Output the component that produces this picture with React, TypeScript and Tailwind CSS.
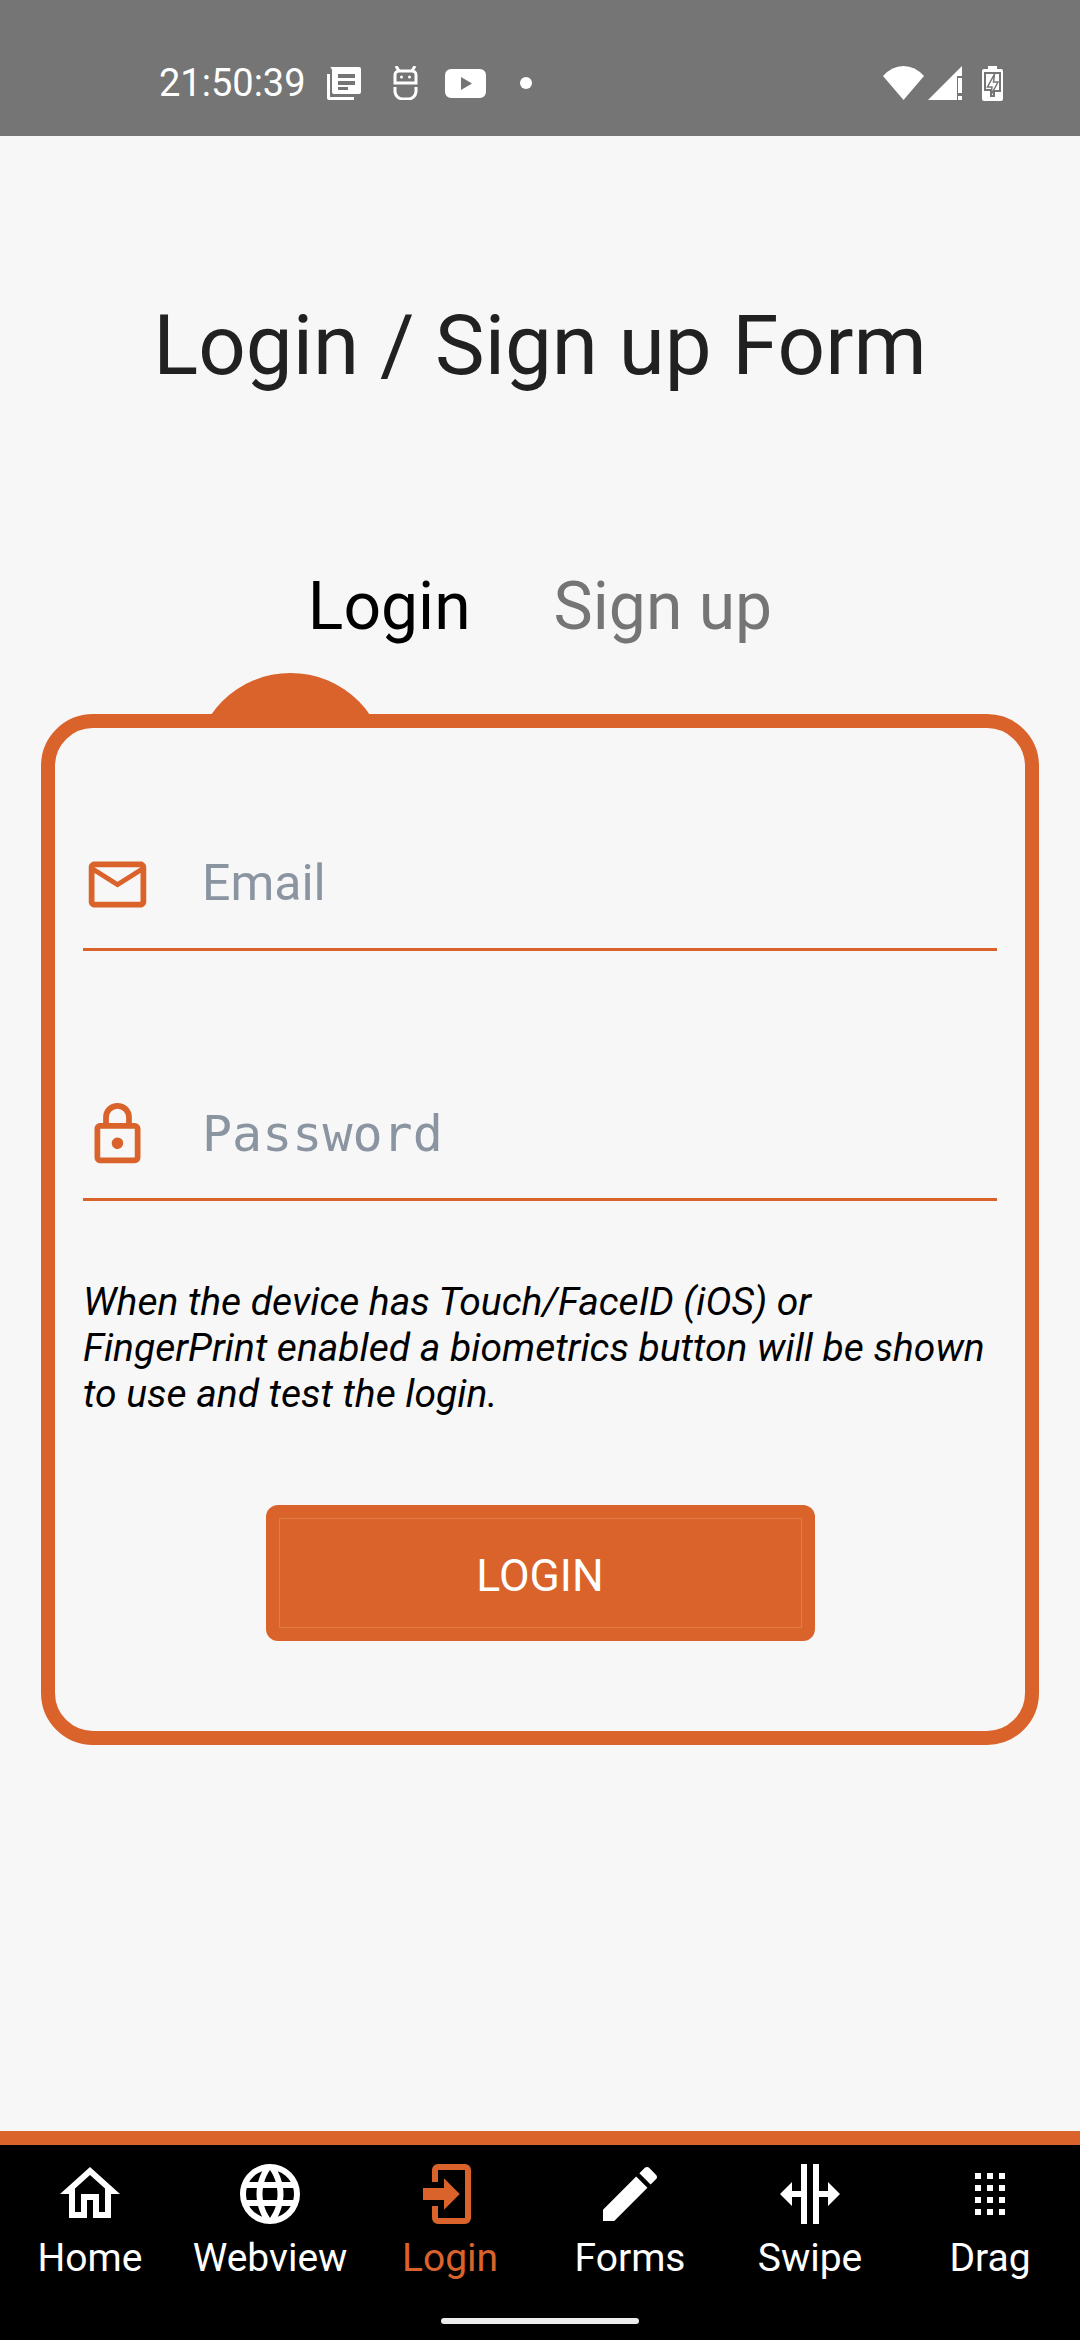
import React from 'react';

const paths = {
  home: 'M12 5.69L17 10.19V18H15V12H9V18H7V10.19L12 5.69M12 3L2 12H5V20H11V14H13V20H19V12H22',
  web: 'M16.36,14C16.44,13.34 16.5,12.68 16.5,12C16.5,11.32 16.44,10.66 16.36,10H19.74C19.9,10.64 20,11.31 20,12C20,12.69 19.9,13.36 19.74,14M14.59,19.56C15.19,18.45 15.65,17.25 15.97,16H18.92C17.96,17.65 16.43,18.93 14.59,19.56M14.34,14H9.66C9.56,13.34 9.5,12.68 9.5,12C9.5,11.32 9.56,10.65 9.66,10H14.34C14.43,10.65 14.5,11.32 14.5,12C14.5,12.68 14.43,13.34 14.34,14M12,19.96C11.17,18.76 10.5,17.43 10.09,16H13.91C13.5,17.43 12.83,18.76 12,19.96M8,8H5.08C6.03,6.34 7.57,5.06 9.4,4.44C8.8,5.55 8.35,6.75 8,8M5.08,16H8C8.35,17.25 8.8,18.45 9.4,19.56C7.57,18.93 6.03,17.65 5.08,16M4.26,14C4.1,13.36 4,12.69 4,12C4,11.31 4.1,10.64 4.26,10H7.64C7.56,10.66 7.5,11.32 7.5,12C7.5,12.68 7.56,13.34 7.64,14M12,4.03C12.83,5.23 13.5,6.57 13.91,8H10.09C10.5,6.57 11.17,5.23 12,4.03M18.92,8H15.97C15.65,6.75 15.19,5.55 14.59,4.44C16.43,5.07 17.96,6.34 18.92,8M12,2C6.47,2 2,6.5 2,12A10,10 0 0,0 12,22A10,10 0 0,0 22,12A10,10 0 0,0 12,2Z',
  login: 'M10,17.25V14H3V10H10V6.75L15.25,12L10,17.25M8,2H17A2,2 0 0,1 19,4V20A2,2 0 0,1 17,22H8A2,2 0 0,1 6,20V16H8V20H17V4H8V8H6V4A2,2 0 0,1 8,2Z',
  pencil: 'M20.71,7.04C21.1,6.65 21.1,6 20.71,5.63L18.37,3.29C18,2.9 17.35,2.9 16.96,3.29L15.12,5.12L18.87,8.87M3,17.25V21H6.75L17.81,9.93L14.06,6.18L3,17.25Z',
  swipe: 'M18,16V13H15V22H13V2H15V11H18V8L22,12L18,16M2,12L6,16V13H9V22H11V2H9V11H6V8L2,12Z',
  drag: 'M7,19V17H9V19H7M11,19V17H13V19H11M15,19V17H17V19H15M7,15V13H9V15H7M11,15V13H13V15H11M15,15V13H17V15H15M7,11V9H9V11H7M11,11V9H13V11H11M15,11V9H17V11H15M7,7V5H9V7H7M11,7V5H13V7H11M15,7V5H17V7H15Z',
  email: 'M22 6C22 4.9 21.1 4 20 4H4C2.9 4 2 4.9 2 6V18C2 19.1 2.9 20 4 20H20C21.1 20 22 19.1 22 18V6M20 6L12 11L4 6H20M20 18H4V8L12 13L20 8V18Z',
  lock: 'M12,17C10.89,17 10,16.1 10,15C10,13.89 10.89,13 12,13A2,2 0 0,1 14,15A2,2 0 0,1 12,17M18,20V10H6V20H18M18,8A2,2 0 0,1 20,10V20A2,2 0 0,1 18,22H6C4.89,22 4,21.1 4,20V10C4,8.89 4.89,8 6,8H7V6A5,5 0 0,1 12,1A5,5 0 0,1 17,6V8H18M12,3A3,3 0 0,0 9,6V8H15V6A3,3 0 0,0 12,3Z',
};

const Mdi = ({ d, className }: { d: string; className: string }) => (
  <svg viewBox="0 0 24 24" fill="currentColor" className={className}>
    <path d={d} />
  </svg>
);

const StatusBar = () => (
  <div className="h-[136px] shrink-0 bg-[#757575] flex items-center pt-[30px] text-white">
    <span className="ml-[159px] w-[156px] text-[38px] leading-none font-['Roboto',sans-serif]">21:50:39</span>
    {/* notification icons */}
    <svg viewBox="0 0 34 34" fill="currentColor" className="ml-[12px] w-[34px] h-[34px]">
      <path d="M3 1h29a2 2 0 0 1 2 2v23a2 2 0 0 1-2 2H7a2 2 0 0 1-2-2V6a5 5 0 0 0-2-5zM11 8v4h17V8zM11 15v4h17v-4zM11 21v3h10v-3z" fillRule="evenodd" />
      <path d="M0 8h3v23h24v3H2a2 2 0 0 1-2-2z" />
    </svg>
    <svg viewBox="0 0 25 34" fill="none" stroke="currentColor" strokeWidth="3" className="ml-[32px] w-[25px] h-[34px]">
      <path d="M2 17V9a4 4 0 0 1 4-4h13a4 4 0 0 1 4 4v8zM2 21v5a8 8 0 0 0 8 7h5a8 8 0 0 0 8-7v-5" />
      <path d="M3 0l3 5M22 0l-3 5" />
      <circle cx="8.500" cy="11" r="1.500" fill="currentColor" stroke="none" />
      <circle cx="16.500" cy="11" r="1.500" fill="currentColor" stroke="none" />
    </svg>
    <svg viewBox="0 0 41 29" className="ml-[27px] w-[41px] h-[29px]">
      <path fill="currentColor" fillRule="evenodd" d="M6 0h29a6 6 0 0 1 6 6v17a6 6 0 0 1-6 6H6a6 6 0 0 1-6-6V6a6 6 0 0 1 6-6zM16 8v13l11-6.500z" />
    </svg>
    <div className="ml-[34px] w-3 h-3 rounded-full bg-white" />
    {/* system icons */}
    <div className="ml-auto mr-[77px] flex items-center">
      <svg viewBox="0 0 41 34" fill="currentColor" className="w-[41px] h-[34px]">
        <path d="M0 10Q9 0 20.500 0T41 10L20.500 34z" />
      </svg>
      <svg viewBox="0 0 34 34" fill="currentColor" className="ml-[4px] w-[34px] h-[34px]">
        <path d="M34 0v10h-5v24H0zM30 12h4v15h-4zM30 30h4v4h-4z" />
      </svg>
      <svg viewBox="0 0 21 35" className="ml-[20px] w-[21px] h-[35px]">
        <path fill="currentColor" d="M6 0h9v3h4a2 2 0 0 1 2 2v28a2 2 0 0 1-2 2H2a2 2 0 0 1-2-2V5a2 2 0 0 1 2-2h4z" />
        <path fill="none" stroke="#757575" strokeWidth="2" d="M3 7h15v18h-6v5H9v-6H3z" />
        <path fill="currentColor" stroke="#757575" strokeWidth="1.500" d="M12.500 8l-7 13h4.500l-1 8 7-13h-4.500z" />
      </svg>
    </div>
  </div>
);

const Field = ({ icon, label, mono }: { icon: string; label: string; mono?: boolean }) => (
  <div className="h-[101px] flex items-start border-b-[3px] border-[#da632b]">
    <Mdi d={icon} className="w-[69px] h-[69px] text-[#da632b]" />
    <span
      className={
        mono
          ? "ml-[50px] mt-[5px] text-[#8a95a1] text-[50px] leading-[58px] font-['DejaVu_Sans_Mono',monospace]"
          : "ml-[50px] mt-[4px] text-[#8a95a1] text-[50px] leading-[58px] font-['Roboto',sans-serif]"
      }
    >
      {label}
    </span>
  </div>
);

const LoginCard = () => (
  <div className="relative mx-[41px] mt-[70px] h-[1031px] rounded-[52px] border-[14px] border-[#da632b] px-[28px]">
    <div className="absolute left-[139px] top-[-55px] w-[193px] h-[55px] overflow-hidden">
      <div className="w-[193px] h-[193px] rounded-full bg-[#da632b]" />
    </div>
    <div className="pt-[122px]">
      <Field icon={paths.email} label="Email" />
    </div>
    <div className="pt-[149px]">
      <Field icon={paths.lock} label="Password" mono />
    </div>
    <p className="mt-[78px] text-[39px] leading-[46px] italic text-black whitespace-nowrap font-['Roboto',sans-serif]">
      When the device has Touch/FaceID (iOS) or
      <br />
      FingerPrint enabled a biometrics button will be shown
      <br />
      to use and test the login.
    </p>
    <div className="mt-[88px] mx-auto w-[549px] h-[136px] rounded-[12px] bg-[#da632b] p-[13px] flex">
      <div className="flex-1 border border-[#e07d47] pt-[6px] flex items-center justify-center text-white text-[44.500px] font-['Roboto',sans-serif]">
        LOGIN
      </div>
    </div>
  </div>
);

const NavItem = ({ icon, label, active }: { icon: string; label: string; active?: boolean }) => (
  <div className={active ? 'flex flex-col items-center text-[#da632b]' : 'flex flex-col items-center text-white'}>
    <Mdi d={icon} className="w-[72px] h-[72px]" />
    <span className="mt-[5px] text-[39px] leading-[46px] font-['Roboto',sans-serif]">{label}</span>
  </div>
);

const BottomNav = () => (
  <div className="relative h-[209px] shrink-0 bg-black border-t-[14px] border-[#da632b] pt-[13px] grid grid-cols-6 content-start">
    <NavItem icon={paths.home} label="Home" />
    <NavItem icon={paths.web} label="Webview" />
    <NavItem icon={paths.login} label="Login" active />
    <NavItem icon={paths.pencil} label="Forms" />
    <NavItem icon={paths.swipe} label="Swipe" />
    <NavItem icon={paths.drag} label="Drag" />
    <div className="absolute left-[441px] bottom-[16px] w-[198px] h-[6px] rounded-full bg-[#ececec]" />
  </div>
);

export default function App() {
  return (
    <div className="w-[1080px] h-[2340px] bg-[#f7f7f7] flex flex-col overflow-hidden font-['Roboto',sans-serif]">
      <StatusBar />
      <div className="flex-1">
        <h1 className="mt-[161px] text-center text-[83.500px] leading-[98px] font-normal text-[#212121]">Login / Sign up Form</h1>
        <div className="mt-[175px] flex justify-center gap-[83px] text-[66px] leading-[74px]">
          <span className="text-black">Login</span>
          <span className="text-[#757575]">Sign up</span>
        </div>
        <LoginCard />
      </div>
      <BottomNav />
    </div>
  );
}
